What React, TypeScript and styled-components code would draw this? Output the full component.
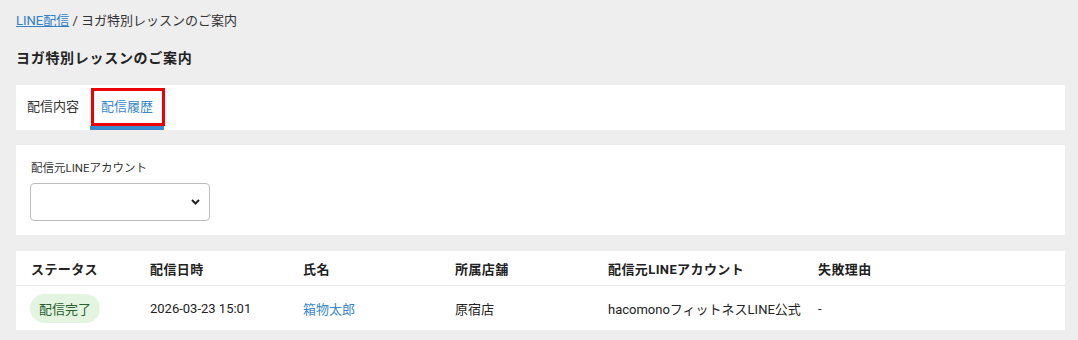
import React from "react"
import styled, { createGlobalStyle } from "styled-components"

const GlobalStyle = createGlobalStyle`
  html, body {
    margin: 0;
    padding: 0;
    background-color: #eeeeee;
  }

  body {
    font-family: Roboto, "Noto Sans CJK JP", sans-serif;
    font-size: 13px;
    color: #333333;
  }

  * {
    box-sizing: border-box;
  }
`

const Page = styled.div`
  padding: 12px 13px 10px 16px;
`

const Breadcrumb = styled.div`
  line-height: 18px;
  font-size: 13px;
  color: #333333;
`

const CrumbLink = styled.a`
  color: #2f80c8;
  text-decoration: underline;
`

const PageTitle = styled.h1`
  margin: 18px 0 17px;
  font-size: 14px;
  line-height: 20px;
  font-weight: 700;
  letter-spacing: 0.7px;
  color: #222222;
`

const Panel = styled.div`
  background-color: white;
`

const TabBar = styled(Panel)`
  display: flex;
  height: 45px;
  margin-bottom: 15px;
`

const Tab = styled.div<{ $active?: boolean }>`
  position: relative;
  display: flex;
  align-items: center;
  height: 45px;
  padding: 0 11px;
  border-bottom: 4px solid ${(p) => (p.$active ? "#3a8ad0" : "transparent")};
  color: ${(p) => (p.$active ? "#3a87c8" : "#333333")};
  font-size: 13px;
  cursor: pointer;
`

// annotation box drawn over the active tab
const Highlight = styled.span`
  position: absolute;
  left: 1px;
  top: 3px;
  right: -1px;
  bottom: 0;
  border: 3px solid #ee0000;
  pointer-events: none;
`

const FilterPanel = styled(Panel)`
  padding: 15px 14px 14px;
  margin-bottom: 16px;
`

const FieldLabel = styled.div`
  padding-left: 1px;
  font-size: 11.5px;
  line-height: 16px;
  margin-bottom: 7px;
  color: #333333;
`

const SelectBox = styled.div`
  display: flex;
  justify-content: flex-end;
  align-items: center;
  width: 180px;
  height: 38px;
  padding-right: 9px;
  border: 1px solid #bdbdbd;
  border-radius: 4px;
  background-color: white;
`

const Chevron = () => (
  <svg width="9" height="6" viewBox="0 0 9 6">
    <path d="M1 1 L4.5 4.5 L8 1" fill="none" stroke="#222" strokeWidth="2" />
  </svg>
)

const TablePanel = styled(Panel)``

const Row = styled.div<{ $head?: boolean }>`
  display: grid;
  grid-template-columns: 119px 153px 152px 153px 210px 1fr;
  align-items: center;
  height: ${(p) => (p.$head ? "35px" : "44px")};
  border-bottom: ${(p) => (p.$head ? "1px solid #e8e8e8" : "none")};
  padding-left: 15px;
`

const HeadCell = styled.div`
  font-weight: 700;
  font-size: 13px;
  letter-spacing: 0.4px;
  color: #222222;
`

const Cell = styled.div`
  font-size: 13px;
  color: #222222;
  white-space: nowrap;
`

const NameLink = styled.a`
  color: #3a87c8;
  text-decoration: none;
`

const Badge = styled.span`
  display: inline-flex;
  align-items: center;
  height: 29px;
  padding: 0 9px;
  border-radius: 15px;
  background-color: #e3f5e1;
  color: #2a5c2c;
  font-size: 13px;
  margin-left: -1px;
`

const columns = ["ステータス", "配信日時", "氏名", "所属店舗", "配信元LINEアカウント", "失敗理由"]

const history = [
  {
    status: "配信完了",
    sentAt: "2026-03-23 15:01",
    name: "箱物太郎",
    store: "原宿店",
    account: "hacomonoフィットネスLINE公式",
    reason: "-",
  },
]

const App: React.FC = () => {
  return (
    <>
      <GlobalStyle />
      <Page>
        <Breadcrumb>
          <CrumbLink href="#">LINE配信</CrumbLink> / ヨガ特別レッスンのご案内
        </Breadcrumb>
        <PageTitle>ヨガ特別レッスンのご案内</PageTitle>

        <TabBar>
          <Tab>配信内容</Tab>
          <Tab $active>
            配信履歴
            <Highlight />
          </Tab>
        </TabBar>

        <FilterPanel>
          <FieldLabel>配信元LINEアカウント</FieldLabel>
          <SelectBox>
            <Chevron />
          </SelectBox>
        </FilterPanel>

        <TablePanel>
          <Row $head>
            {columns.map((c) => (
              <HeadCell key={c}>{c}</HeadCell>
            ))}
          </Row>
          {history.map((h) => (
            <Row key={h.sentAt}>
              <Cell>
                <Badge>{h.status}</Badge>
              </Cell>
              <Cell>{h.sentAt}</Cell>
              <Cell>
                <NameLink href="#">{h.name}</NameLink>
              </Cell>
              <Cell>{h.store}</Cell>
              <Cell>{h.account}</Cell>
              <Cell>{h.reason}</Cell>
            </Row>
          ))}
        </TablePanel>
      </Page>
    </>
  )
}

export default App
